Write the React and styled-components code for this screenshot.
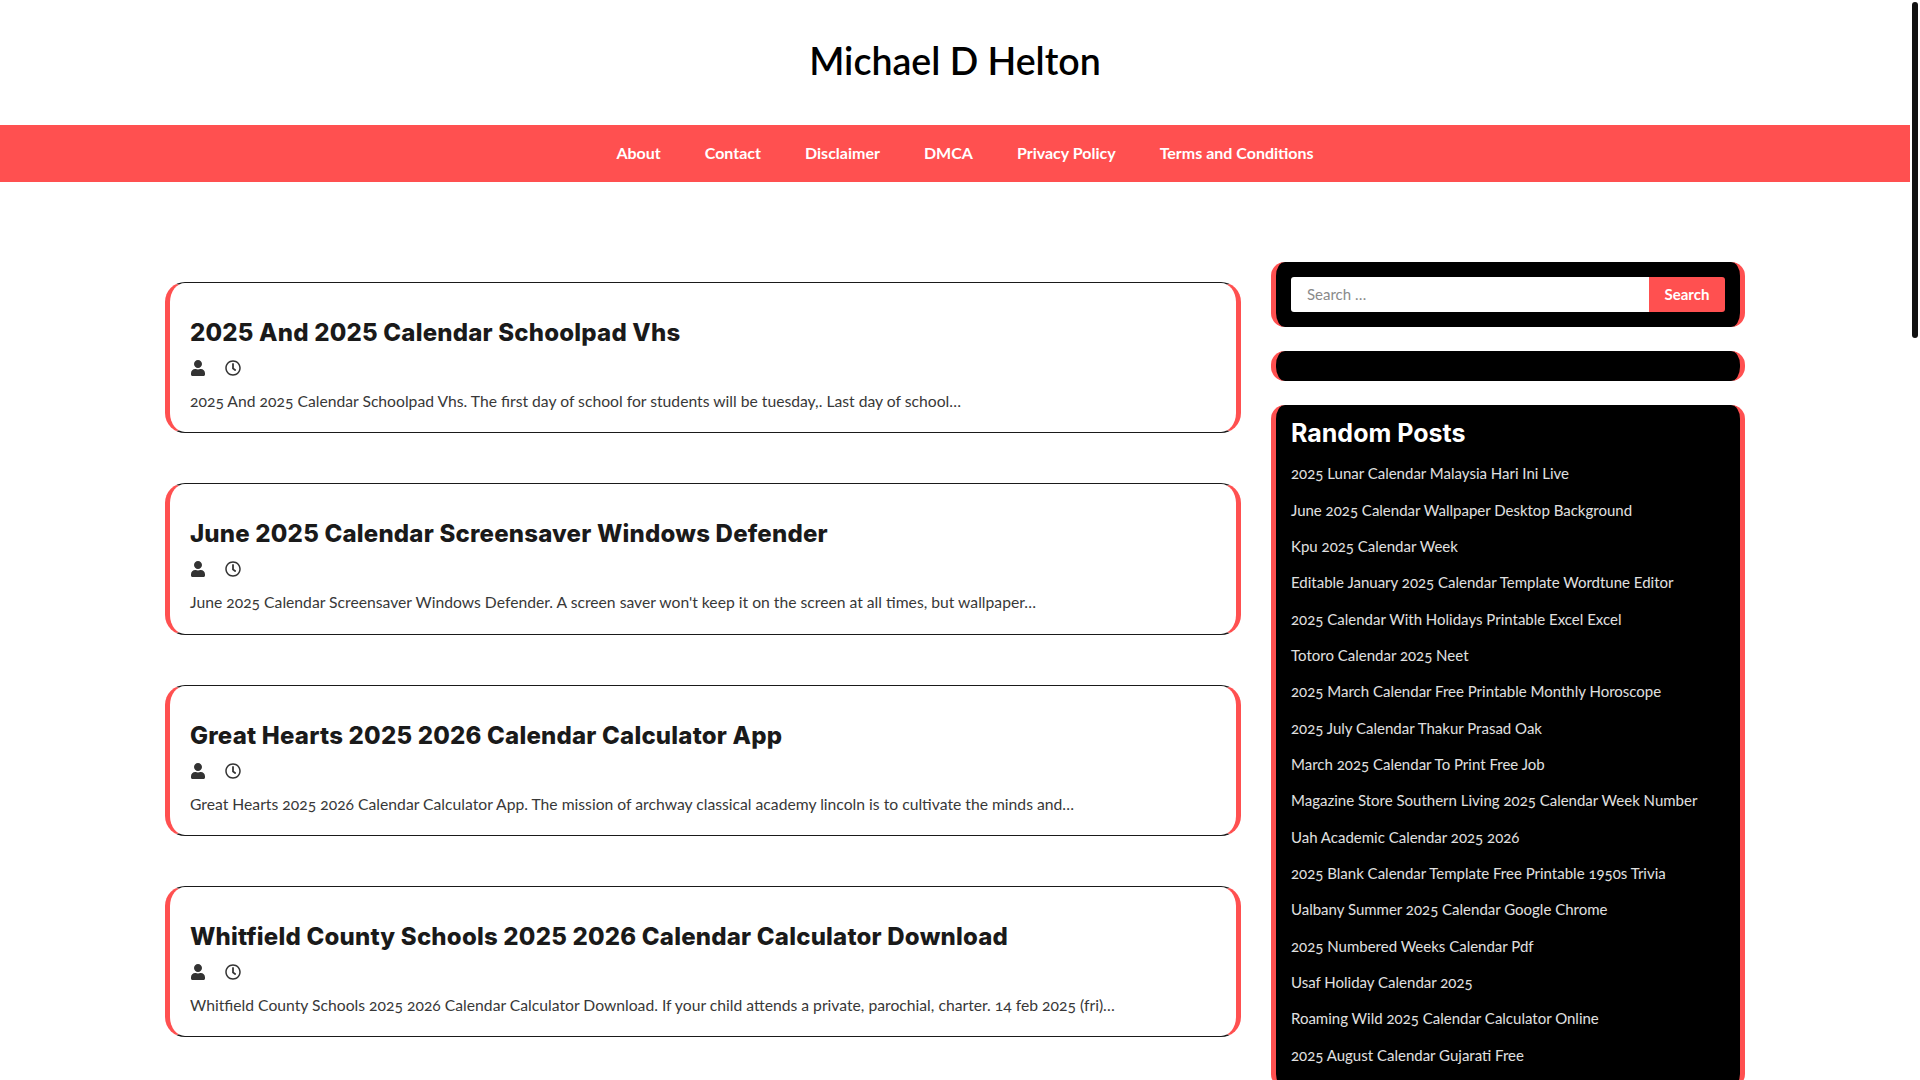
import React from "react";
import styled, { createGlobalStyle } from "styled-components";
import { FaUser, FaRegClock } from "react-icons/fa";

const colors = {
  red: "#ff5050",
  ink: "#1a1a1a",
  text: "#383838",
  light: "#e0e0e0"
};

const bodyFont = `"Lato", "Open Sans", sans-serif`;
const headFont = `"Inter", "Roboto", sans-serif`;

const Global = createGlobalStyle`
  body {
    margin: 0;
    background: #fff;
    font-family: ${bodyFont};
    font-variant-numeric: oldstyle-nums;
    color: ${colors.text};
    overflow-x: hidden;
  }
`;

const Page = styled.div`
  width: 1910px;
  min-height: 3450px;
`;

// the page's own scrollbar, which headless browsers leave out
const ScrollThumb = styled.div`
  position: fixed;
  top: 2px;
  right: 2px;
  width: 6px;
  height: 336px;
  border-radius: 3px;
  background: #111;
`;

const Masthead = styled.header`
  box-sizing: border-box;
  height: 125px;
  padding-bottom: 4px;
  display: flex;
  align-items: center;
  justify-content: center;
`;

const SiteTitle = styled.h1`
  margin: 0;
  font-size: 37.5px;
  font-weight: 600;
  color: #000;
`;

const Nav = styled.nav`
  box-sizing: border-box;
  height: 57px;
  padding: 0 0 2px 20px;
  background: ${colors.red};
  display: flex;
  justify-content: center;
`;

const NavLink = styled.a`
  display: flex;
  align-items: center;
  padding: 0 22px;
  font-size: 16px;
  font-weight: 700;
  color: #fff;
`;

const Columns = styled.div`
  display: grid;
  grid-template-columns: 1076px 474px;
  column-gap: 30px;
  margin-left: 165px;
  padding-top: 80px;
`;

const Main = styled.main`
  padding-top: 20px;
  display: flex;
  flex-direction: column;
  gap: 50px;
`;

const Card = styled.article`
  box-sizing: border-box;
  height: 151.25px;
  padding: 31px 20px 0;
  border: 1px solid ${colors.ink};
  border-left: 5px solid ${colors.red};
  border-right: 5px solid ${colors.red};
  border-radius: 20px;
`;

const CardTitle = styled.h2`
  margin: 0;
  font-family: ${headFont};
  font-variant-numeric: normal;
  font-size: 24px;
  line-height: 38px;
  font-weight: 800;
  letter-spacing: 0.2px;
  color: ${colors.ink};
`;

const Meta = styled.div`
  display: flex;
  align-items: center;
  gap: 19px;
  margin-top: 6px;
  height: 20px;
  font-size: 16px;
  color: #333;
`;

const Excerpt = styled.p`
  margin: 12px 0 0;
  font-size: 15.7px;
  line-height: 22px;
  color: ${colors.text};
`;

const Sidebar = styled.aside`
  display: flex;
  flex-direction: column;
  gap: 24px;
`;

const Widget = styled.section`
  box-sizing: border-box;
  padding: ${(p) => p.$pad || "15px"};
  min-height: ${(p) => p.$minHeight || "auto"};
  background: #000;
  border-left: 5px solid ${colors.red};
  border-right: 5px solid ${colors.red};
  border-radius: 14px;
`;

const SearchForm = styled.form`
  display: flex;
  height: 35px;
`;

const SearchInput = styled.input`
  flex: 1;
  min-width: 0;
  box-sizing: border-box;
  padding: 0 16px 2px;
  border: 0;
  border-radius: 3px 0 0 3px;
  background: #fff;
  font-family: ${bodyFont};
  font-size: 15px;
  &::placeholder {
    color: #8a8a8a;
  }
`;

const SearchButton = styled.button`
  width: 76px;
  padding: 0 0 2px;
  border: 0;
  border-radius: 0 3px 3px 0;
  background: ${colors.red};
  color: #fff;
  font-family: ${bodyFont};
  font-size: 15px;
  font-weight: 700;
`;

const WidgetTitle = styled.h2`
  margin: 0 0 4px;
  font-family: ${headFont};
  font-size: 25px;
  line-height: 36px;
  font-weight: 700;
  color: #fff;
`;

const PostList = styled.ul`
  margin: 0;
  padding: 0;
  list-style: none;
`;

const PostItem = styled.li`
  height: 36.35px;
  display: flex;
  align-items: center;
  font-size: 15px;
  color: ${colors.light};
`;

const posts = [
  {
    title: "2025 And 2025 Calendar Schoolpad Vhs",
    excerpt:
      "2025 And 2025 Calendar Schoolpad Vhs. The first day of school for students will be tuesday,. Last day of school…"
  },
  {
    title: "June 2025 Calendar Screensaver Windows Defender",
    excerpt:
      "June 2025 Calendar Screensaver Windows Defender. A screen saver won't keep it on the screen at all times, but wallpaper…"
  },
  {
    title: "Great Hearts 2025 2026 Calendar Calculator App",
    excerpt:
      "Great Hearts 2025 2026 Calendar Calculator App. The mission of archway classical academy lincoln is to cultivate the minds and…"
  },
  {
    title: "Whitfield County Schools 2025 2026 Calendar Calculator Download",
    excerpt:
      "Whitfield County Schools 2025 2026 Calendar Calculator Download. If your child attends a private, parochial, charter. 14 feb 2025 (fri)…"
  }
];

const randomPosts = [
  "2025 Lunar Calendar Malaysia Hari Ini Live",
  "June 2025 Calendar Wallpaper Desktop Background",
  "Kpu 2025 Calendar Week",
  "Editable January 2025 Calendar Template Wordtune Editor",
  "2025 Calendar With Holidays Printable Excel Excel",
  "Totoro Calendar 2025 Neet",
  "2025 March Calendar Free Printable Monthly Horoscope",
  "2025 July Calendar Thakur Prasad Oak",
  "March 2025 Calendar To Print Free Job",
  "Magazine Store Southern Living 2025 Calendar Week Number",
  "Uah Academic Calendar 2025 2026",
  "2025 Blank Calendar Template Free Printable 1950s Trivia",
  "Ualbany Summer 2025 Calendar Google Chrome",
  "2025 Numbered Weeks Calendar Pdf",
  "Usaf Holiday Calendar 2025",
  "Roaming Wild 2025 Calendar Calculator Online",
  "2025 August Calendar Gujarati Free"
];

const navItems = [
  "About",
  "Contact",
  "Disclaimer",
  "DMCA",
  "Privacy Policy",
  "Terms and Conditions"
];

export default function App() {
  return (
    <Page>
      <Global />
      <ScrollThumb />
      <Masthead>
        <SiteTitle>Michael D Helton</SiteTitle>
      </Masthead>
      <Nav>
        {navItems.map((item) => (
          <NavLink key={item}>{item}</NavLink>
        ))}
      </Nav>
      <Columns>
        <Main>
          {posts.map((post) => (
            <Card key={post.title}>
              <CardTitle>{post.title}</CardTitle>
              <Meta>
                <FaUser />
                <FaRegClock />
              </Meta>
              <Excerpt>{post.excerpt}</Excerpt>
            </Card>
          ))}
        </Main>
        <Sidebar>
          <Widget>
            <SearchForm>
              <SearchInput placeholder="Search …" />
              <SearchButton type="button">Search</SearchButton>
            </SearchForm>
          </Widget>
          <Widget $minHeight="30px" $pad="0" />
          <Widget $pad="10px 15px 15px">
            <WidgetTitle>Random Posts</WidgetTitle>
            <PostList>
              {randomPosts.map((post) => (
                <PostItem key={post}>{post}</PostItem>
              ))}
            </PostList>
          </Widget>
        </Sidebar>
      </Columns>
    </Page>
  );
}
